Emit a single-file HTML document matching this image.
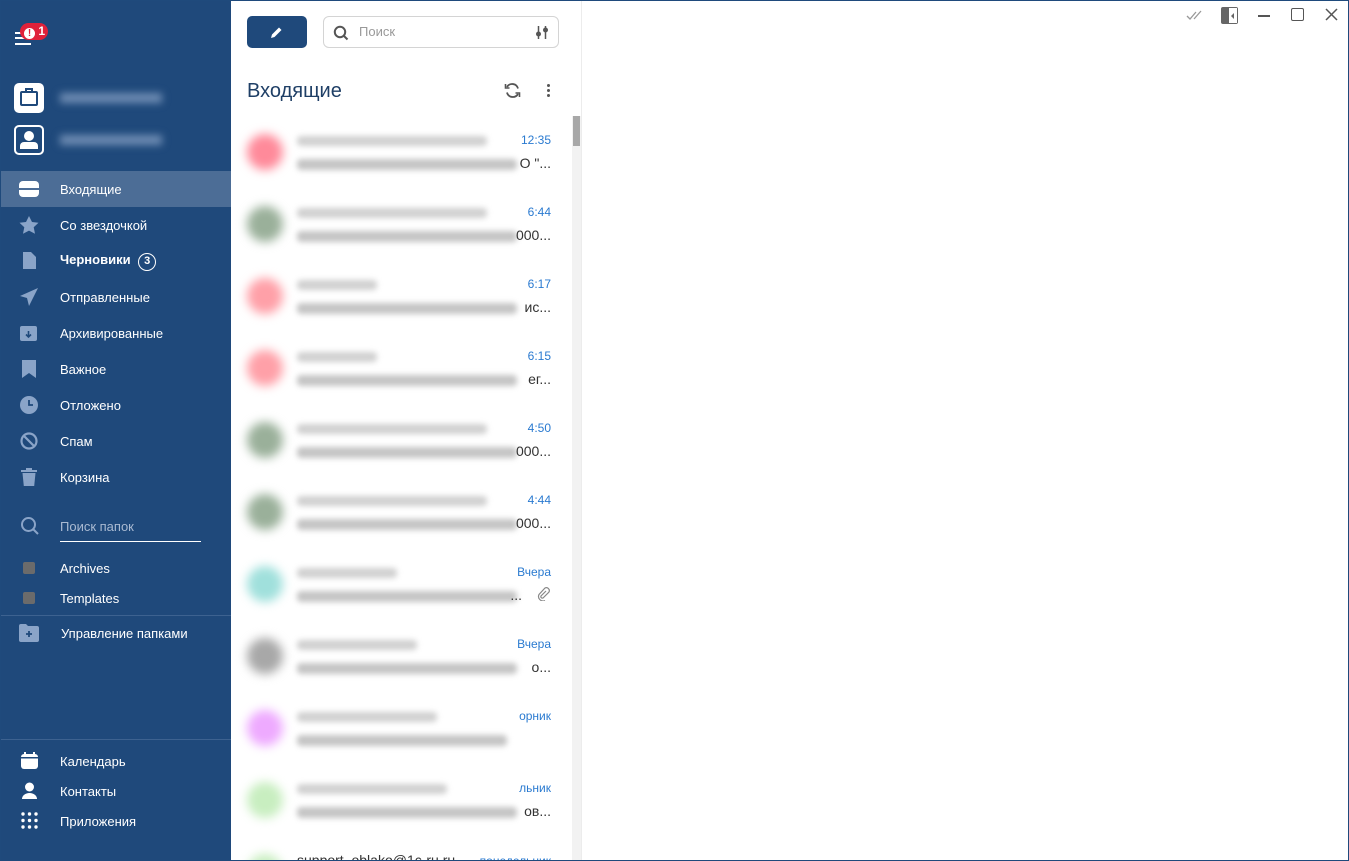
<!DOCTYPE html>
<html style="width:1349px;height:861px;overflow:hidden"><head><meta charset="utf-8"><style>
*{box-sizing:border-box;margin:0;padding:0}
body{width:1349px;height:861px;overflow:hidden;font-family:"Liberation Sans",sans-serif;background:#fff;position:relative}
.frame{position:absolute;left:0;top:0;width:1349px;height:861px;border:1px solid #1f4a7c;pointer-events:none;z-index:10}
.side{position:absolute;left:0;top:0;width:231px;height:861px;background:#1f497b;color:#fff}
.it{position:absolute;left:0;width:231px;height:36px;font-size:13px;display:flex;align-items:center}
.it .ic{position:absolute;left:19px;top:9px;width:20px;height:18px}
.it span{position:absolute;left:60px}
.list{position:absolute;left:231px;top:0;width:341px;height:861px;overflow:hidden}
.row{position:absolute;left:0;width:341px;height:72px}
.av{position:absolute;left:16px;top:24px;width:36px;height:36px;border-radius:50%;filter:blur(5px)}
.l1{position:absolute;left:66px;top:26px;height:10px;width:190px;background:#d0d0d0;filter:blur(3px);border-radius:4px}
.l2{position:absolute;left:66px;top:49px;height:11px;width:220px;background:#c4c4c4;filter:blur(3px);border-radius:4px}
.tm{position:absolute;right:21px;top:23px;font-size:12px;color:#2a7ad0}
.tx{position:absolute;right:21px;top:45px;font-size:14px;color:#333}
</style></head><body>
<div class="frame"></div>
<div class="side">
 <div style="position:absolute;left:15px;top:32px;width:16px;height:2px;background:#fff;box-shadow:0 5px 0 #fff,0 11px 0 #fff"></div>
 <div style="position:absolute;left:20px;top:23px;width:28px;height:17px;background:#e0213a;border-radius:9px;font-size:12px;font-weight:bold;color:#fff;line-height:17px;padding-left:4px"><span style="display:inline-block;width:11px;height:11px;background:#fff;border-radius:50%;color:#e0213a;font-size:10px;text-align:center;line-height:11px;vertical-align:-1px">!</span> 1</div>
 <div style="position:absolute;left:14px;top:83px;width:30px;height:30px;background:#fff;border-radius:5px"><div style="position:absolute;left:6px;top:8px;width:18px;height:15px;border:2px solid #1f497b;border-radius:2px"></div><div style="position:absolute;left:11px;top:5px;width:8px;height:4px;border:2px solid #1f497b;border-bottom:0"></div></div>
 <div style="position:absolute;left:60px;top:93px;width:102px;height:10px;background:#6e8cb3;filter:blur(4px)"></div>
 <div style="position:absolute;left:14px;top:125px;width:30px;height:30px;border:2px solid #fff;border-radius:5px"><div style="position:absolute;left:8px;top:4px;width:10px;height:10px;background:#fff;border-radius:50%"></div><div style="position:absolute;left:4px;top:15px;width:18px;height:7px;background:#fff;border-radius:4px 4px 0 0"></div></div>
 <div style="position:absolute;left:60px;top:135px;width:102px;height:10px;background:#6e8cb3;filter:blur(4px)"></div>
 <div class="it" style="top:171px;background:#4c6d96"><div class="ic" style="background:#fff;border-radius:4px;height:16px;top:10px"><div style="position:absolute;left:0;top:7px;width:20px;height:2px;background:#4c6d96"></div></div><span>Входящие</span></div>
 <div class="it" style="top:207px"><svg class="ic" viewBox="0 0 20 18"><path d="M10 0l3 6 6.5.8-4.8 4.5 1.3 6.5L10 14.6 4 17.8l1.3-6.5L.5 6.8 7 6z" fill="#8aa4c8"/></svg><span>Со звездочкой</span></div>
 <div class="it" style="top:243px"><svg class="ic" viewBox="0 0 20 18"><path d="M4 0h8l5 5v12H4z" fill="#8aa4c8"/></svg><span style="font-weight:bold">Черновики <span style="position:static;display:inline-block;width:18px;height:18px;border:1.5px solid #fff;border-radius:50%;text-align:center;font-size:11px;line-height:15px;margin-left:4px">3</span></span></div>
 <div class="it" style="top:279px"><svg class="ic" viewBox="0 0 20 18"><path d="M19 0L1 8l7 2 2 8z" fill="#8aa4c8"/></svg><span>Отправленные</span></div>
 <div class="it" style="top:315px"><svg class="ic" viewBox="0 0 20 18"><rect x="1" y="2" width="17" height="15" rx="2" fill="#8aa4c8"/><path d="M9.5 7v6M7 10.5l2.5 2.5 2.5-2.5" stroke="#1f497b" stroke-width="1.6" fill="none"/></svg><span>Архивированные</span></div>
 <div class="it" style="top:351px"><svg class="ic" viewBox="0 0 20 18"><path d="M3 0h14v18l-7-5-7 5z" fill="#8aa4c8"/></svg><span>Важное</span></div>
 <div class="it" style="top:387px"><svg class="ic" viewBox="0 0 20 18"><circle cx="10" cy="9" r="9" fill="#8aa4c8"/><path d="M10 4v5h4" stroke="#1f497b" stroke-width="1.8" fill="none"/></svg><span>Отложено</span></div>
 <div class="it" style="top:423px"><svg class="ic" viewBox="0 0 20 18"><circle cx="10" cy="9" r="7.5" stroke="#8aa4c8" stroke-width="2.2" fill="none"/><path d="M4.5 3.5l11 11" stroke="#8aa4c8" stroke-width="2.2"/></svg><span>Спам</span></div>
 <div class="it" style="top:459px"><svg class="ic" viewBox="0 0 20 18"><path d="M2 2h16v2H2zM7 0h6v2H7zM3.5 5h13l-1.3 13H4.8z" fill="#8aa4c8"/></svg><span>Корзина</span></div>
 <svg style="position:absolute;left:20px;top:516px" width="20" height="20" viewBox="0 0 20 20"><circle cx="8.5" cy="8.5" r="6.5" stroke="#8aa4c8" stroke-width="2" fill="none"/><path d="M13 13l5 5" stroke="#8aa4c8" stroke-width="2"/></svg>
 <div style="position:absolute;left:60px;top:519px;font-size:13px;color:#a9bad2">Поиск папок</div>
 <div style="position:absolute;left:60px;top:541px;width:141px;height:1px;background:#fff"></div>
 <div style="position:absolute;left:23px;top:562px;width:12px;height:12px;background:#6b6b6b;border-radius:2px"></div>
 <div style="position:absolute;left:60px;top:561px;font-size:13px">Archives</div>
 <div style="position:absolute;left:23px;top:592px;width:12px;height:12px;background:#6b6b6b;border-radius:2px"></div>
 <div style="position:absolute;left:60px;top:591px;font-size:13px">Templates</div>
 <div style="position:absolute;left:0;top:615px;width:231px;height:1px;background:#3d6290"></div>
 <svg style="position:absolute;left:19px;top:624px" width="20" height="18" viewBox="0 0 20 18"><path d="M0 2a2 2 0 012-2h5l2 2h9a2 2 0 012 2v12a2 2 0 01-2 2H2a2 2 0 01-2-2z" fill="#8aa4c8"/><path d="M10 7v6M7 10h6" stroke="#1f497b" stroke-width="1.8"/></svg>
 <div style="position:absolute;left:61px;top:626px;font-size:13px">Управление папками</div>
 <div style="position:absolute;left:0;top:739px;width:231px;height:1px;background:#3d6290"></div>
 <svg style="position:absolute;left:21px;top:752px" width="17" height="17" viewBox="0 0 17 17"><rect x="0" y="2" width="17" height="15" rx="3" fill="#fff"/><rect x="3" y="0" width="2" height="4" fill="#fff"/><rect x="12" y="0" width="2" height="4" fill="#fff"/><rect x="0" y="5" width="17" height="1.5" fill="#1f497b"/></svg>
 <div style="position:absolute;left:60px;top:754px;font-size:13px">Календарь</div>
 <svg style="position:absolute;left:21px;top:782px" width="17" height="17" viewBox="0 0 17 17"><circle cx="8.5" cy="5" r="4.5" fill="#fff"/><path d="M1 17a7.5 6 0 0115 0z" fill="#fff"/></svg>
 <div style="position:absolute;left:60px;top:784px;font-size:13px">Контакты</div>
 <svg style="position:absolute;left:21px;top:812px" width="17" height="17" viewBox="0 0 17 17" fill="#fff"><circle cx="2" cy="2" r="1.7"/><circle cx="8.5" cy="2" r="1.7"/><circle cx="15" cy="2" r="1.7"/><circle cx="2" cy="8.5" r="1.7"/><circle cx="8.5" cy="8.5" r="1.7"/><circle cx="15" cy="8.5" r="1.7"/><circle cx="2" cy="15" r="1.7"/><circle cx="8.5" cy="15" r="1.7"/><circle cx="15" cy="15" r="1.7"/></svg>
 <div style="position:absolute;left:60px;top:814px;font-size:13px">Приложения</div>
</div>

<div style="position:absolute;left:247px;top:16px;width:60px;height:32px;background:#1f497b;border-radius:5px"><svg style="position:absolute;left:23px;top:10px" width="13" height="13" viewBox="0 0 13 13"><path d="M1 12l1-3.5 7-7 2.5 2.5-7 7z" fill="#fff"/></svg></div>
<div style="position:absolute;left:323px;top:16px;width:236px;height:32px;border:1px solid #d4d4d4;border-radius:6px">
 <svg style="position:absolute;left:9px;top:8px" width="16" height="16" viewBox="0 0 16 16"><circle cx="7" cy="7" r="5.2" stroke="#555" stroke-width="2" fill="none"/><path d="M11 11l3.5 3.5" stroke="#555" stroke-width="2"/></svg>
 <div style="position:absolute;left:35px;top:7px;font-size:13px;color:#999">Поиск</div>
 <svg style="position:absolute;left:211px;top:8px" width="14" height="15" viewBox="0 0 14 15"><path d="M3.5 1v13M10.5 1v13" stroke="#555" stroke-width="1.5"/><circle cx="3.5" cy="9" r="2.5" fill="#555"/><circle cx="10.5" cy="5" r="2.5" fill="#555"/></svg>
</div>
<div style="position:absolute;left:247px;top:80px;font-size:20px;color:#1f3f66">Входящие</div>
<svg style="position:absolute;left:504px;top:82px" width="17" height="17" viewBox="0 0 17 17"><path d="M14 6.5A6 6 0 003 5M3 10.5A6 6 0 0014 12" stroke="#555" stroke-width="1.8" fill="none"/><path d="M1.5 2v4h4M15.5 15v-4h-4" stroke="#555" stroke-width="1.6" fill="none"/></svg>
<div style="position:absolute;left:547px;top:84px;width:3px;height:3px;background:#555;border-radius:50%;box-shadow:0 5px 0 #555,0 10px 0 #555"></div>

<div style="position:absolute;left:572px;top:116px;width:9px;height:745px;background:#f2f2f2"></div>
<div style="position:absolute;left:573px;top:116px;width:7px;height:30px;background:#a8a8a8"></div>
<div style="position:absolute;left:581px;top:0;width:1px;height:861px;background:#ececec"></div>

<div class="list">
<div class="row" style="top:110px"><div class="av" style="background:#ff8a9a"></div><div class="l1"></div><div class="l2"></div><div class="tm">12:35</div><div class="tx">О "...</div></div>
<div class="row" style="top:182px"><div class="av" style="background:#9ab09a"></div><div class="l1"></div><div class="l2"></div><div class="tm">6:44</div><div class="tx">000...</div></div>
<div class="row" style="top:254px"><div class="av" style="background:#ffa0a8"></div><div class="l1" style="width:80px"></div><div class="l2"></div><div class="tm">6:17</div><div class="tx">ис...</div></div>
<div class="row" style="top:326px"><div class="av" style="background:#ffa0a8"></div><div class="l1" style="width:80px"></div><div class="l2"></div><div class="tm">6:15</div><div class="tx">ег...</div></div>
<div class="row" style="top:398px"><div class="av" style="background:#9ab09a"></div><div class="l1"></div><div class="l2"></div><div class="tm">4:50</div><div class="tx">000...</div></div>
<div class="row" style="top:470px"><div class="av" style="background:#9ab09a"></div><div class="l1"></div><div class="l2"></div><div class="tm">4:44</div><div class="tx">000...</div></div>
<div class="row" style="top:542px"><div class="av" style="background:#a0e0dc"></div><div class="l1" style="width:100px"></div><div class="l2"></div><div class="tm">Вчера</div><div class="tx" style="right:50px">...</div><svg style="position:absolute;right:21px;top:45px" width="14" height="14" viewBox="0 0 14 14"><path d="M9 4l-5 5a1.5 1.5 0 002 2l6-6a3 3 0 00-4-4L2 7.5a4.5 4.5 0 006 6" stroke="#888" stroke-width="1.2" fill="none"/></svg></div>
<div class="row" style="top:614px"><div class="av" style="background:#a8a8a8"></div><div class="l1" style="width:120px"></div><div class="l2"></div><div class="tm">Вчера</div><div class="tx">о...</div></div>
<div class="row" style="top:686px"><div class="av" style="background:#eeaaff"></div><div class="l1" style="width:140px"></div><div class="l2" style="width:210px"></div><div class="tm">орник</div></div>
<div class="row" style="top:758px"><div class="av" style="background:#c8eec0"></div><div class="l1" style="width:150px"></div><div class="l2"></div><div class="tm">льник</div><div class="tx">ов...</div></div>
<div class="row" style="top:830px"><div class="av" style="background:#c8eec0"></div><div style="position:absolute;left:66px;top:22px;font-size:14px;color:#333">support_oblako@1c-ru.ru</div><div class="tm" style="top:24px">понедельник</div></div>
</div>

<svg style="position:absolute;left:1186px;top:9px" width="18" height="12" viewBox="0 0 18 12"><path d="M1 7l3 3 6-7M8 10l7-8" stroke="#999" stroke-width="1.3" fill="none"/></svg>
<div style="position:absolute;left:1221px;top:7px;width:17px;height:17px;background:#666;border-radius:2px"><div style="position:absolute;right:1px;top:1px;width:8px;height:15px;background:#fff"></div><div style="position:absolute;left:10px;top:6px;border:3px solid transparent;border-right:3px solid #666;border-left:0"></div></div>
<div style="position:absolute;left:1258px;top:15px;width:12px;height:1.5px;background:#555"></div>
<div style="position:absolute;left:1291px;top:8px;width:13px;height:13px;border:1.5px solid #555;border-radius:2px"></div>
<svg style="position:absolute;left:1325px;top:8px" width="13" height="13" viewBox="0 0 13 13"><path d="M1 1l11 11M12 1L1 12" stroke="#555" stroke-width="1.5"/></svg>
</body></html>
